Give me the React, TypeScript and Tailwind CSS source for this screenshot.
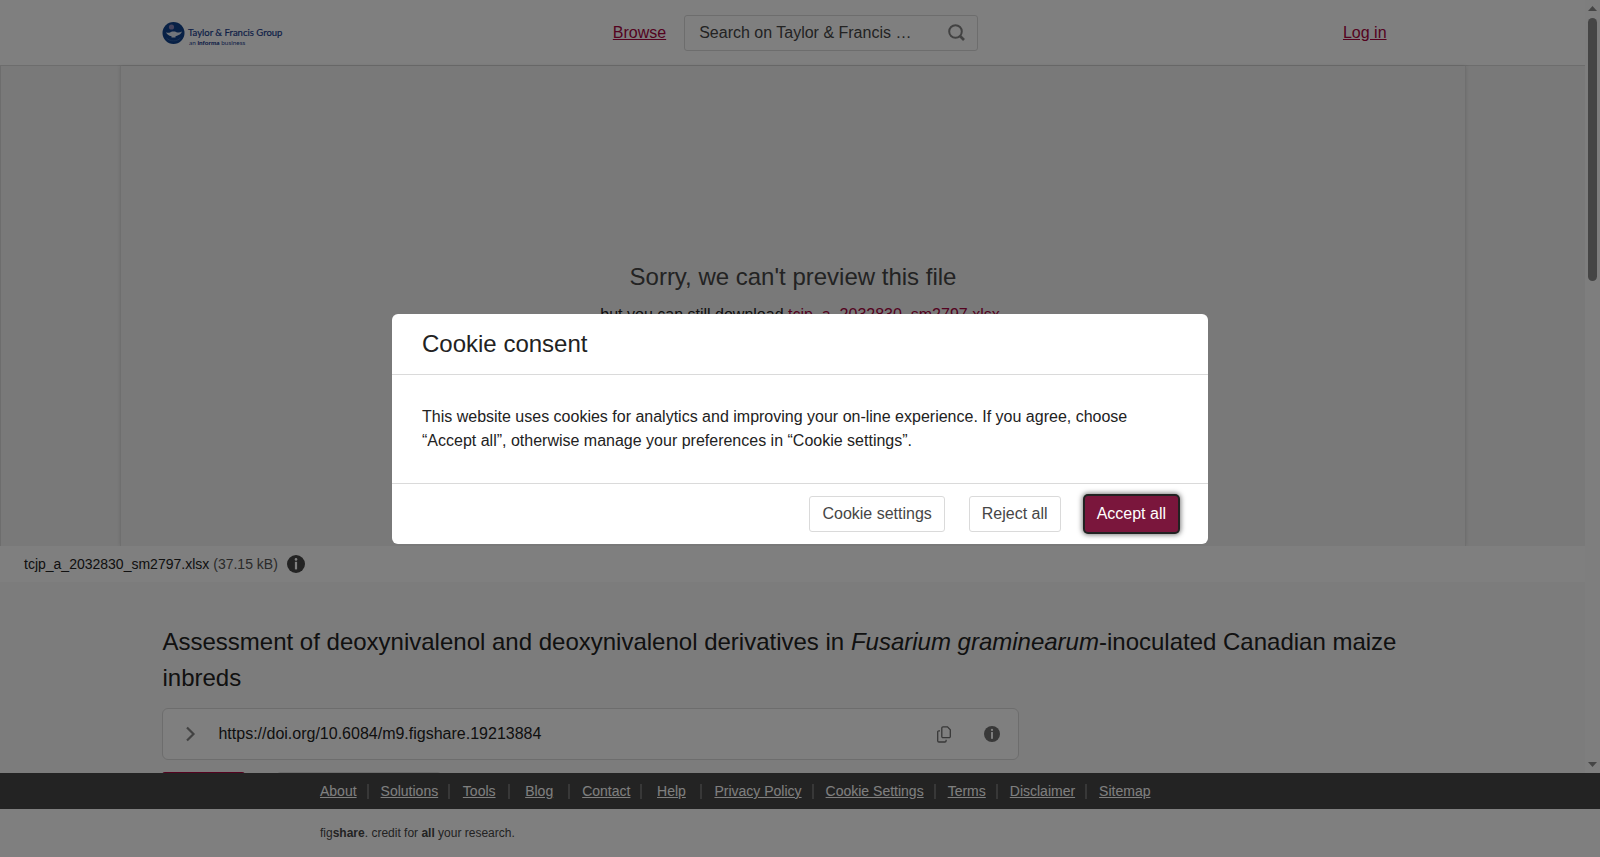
import type { ReactNode } from "react";

const FILE_NAME = "tcjp_a_2032830_sm2797.xlsx";

const FOOTER_LINKS = [
  { label: "About", size: "pr-[10px]" },
  { label: "Solutions", size: "pl-3 pr-[10px]" },
  { label: "Tools", size: "w-[60px]" },
  { label: "Blog", size: "w-[60px]" },
  { label: "Contact", size: "pl-3 pr-[10px]" },
  { label: "Help", size: "w-[60px]" },
  { label: "Privacy Policy", size: "pl-3 pr-[10px]" },
  { label: "Cookie Settings", size: "pl-3 pr-[10px]" },
  { label: "Terms", size: "pl-3 pr-[10px]" },
  { label: "Disclaimer", size: "pl-3 pr-[10px]" },
  { label: "Sitemap", size: "pl-3 pr-[10px]" },
];

function InfoIcon({ className }: { className: string }) {
  return (
    <svg viewBox="0 0 18 18" className={className} aria-hidden="true">
      <circle cx="9" cy="9" r="9" fill="currentColor" />
      <circle cx="9" cy="4.4" r="1.3" fill="#fff" />
      <rect x="7.9" y="6.8" width="2.2" height="7.6" fill="#fff" />
    </svg>
  );
}

function Logo() {
  return (
    <svg width="122" height="28" viewBox="0 -1 122 28" role="img" aria-label="Taylor & Francis Group">
      <circle cx="11.5" cy="13" r="11" fill="#10428c" />
      <circle cx="9.5" cy="7" r="2.6" fill="#8a86b8" />
      <path d="M4 12.2c1.500.7 3 .7 4.500 0l1.500-.6h3l1.500.6c2 .7 4 .3 5.500-.8-.8 2-2.600 3.600-5 4.300l-1.500.5v1.300h-4v-1.300C6.500 15.600 5 14.200 4 12.200z" fill="#e4ecf7" />
      <path d="M4.500 18c3.500 3.800 10.500 3.800 14 0" fill="none" stroke="#3a67a8" strokeWidth="0.8" />
      <text x="26" y="16" fontFamily="Lato, sans-serif" fontSize="9.5" fill="#1d3f8f" stroke="#1d3f8f" strokeWidth="0.2">
        Taylor &amp; Francis Group
      </text>
      <text x="27" y="25" fontFamily="Lato, sans-serif" fontSize="6.4" fill="#1d3f8f">
        an <tspan fontWeight="900">informa</tspan> business
      </text>
    </svg>
  );
}

function Header() {
  return (
    <header className="border-b border-[#dadada] bg-white">
      <div className="mx-auto grid h-[65px] w-[79.5%] grid-cols-[1fr_auto_1fr] items-center">
        <a href="#home" className="justify-self-start">
          <Logo />
        </a>
        <div className="flex items-center gap-[18px] pl-[6px]">
          <a href="#browse" className="text-[#a8043f] underline">Browse</a>
          <label className="flex h-9 w-[294px] items-center rounded-[3px] border border-[#dadada] pr-3 pl-[14px]">
            <input
              type="search"
              aria-label="Search"
              placeholder="Search on Taylor &amp; Francis …"
              className="min-w-0 flex-1 bg-transparent outline-none placeholder:text-[#464646]"
            />
            <svg width="17" height="17" viewBox="0 0 17 17" fill="none" stroke="#848484" strokeWidth="2" aria-hidden="true">
              <circle cx="7.5" cy="7.5" r="6.3" />
              <path d="M12 12l4 4" strokeWidth="2.6" />
            </svg>
          </label>
        </div>
        <a href="#login" className="mr-9 justify-self-end text-[#a8043f] underline">Log in</a>
      </div>
    </header>
  );
}

function FilePreview() {
  return (
    <section>
      <div className="h-[480px] border-l border-[#dadada] bg-[#f3f3f3] px-[119px]">
        <div className="h-full border-x border-[#dfdfdf] pt-[193px] text-center shadow-[0_0_4px_rgba(0,0,0,0.12)]">
          <h2 className="text-2xl leading-9 text-[#464646]">Sorry, we can't preview this file</h2>
          <p className="mt-2 pl-[14px] leading-6">
            but you can still download <a href="#file" className="text-[#a8043f]">{FILE_NAME}</a>
          </p>
        </div>
      </div>
      <div className="flex h-9 items-center bg-white pl-6 text-sm">
        <span>{FILE_NAME}</span>
        <span className="ml-1 text-[#555]">(37.15 kB)</span>
        <button type="button" aria-label="File details" className="ml-[9px] text-[#464646]">
          <InfoIcon className="size-[18px]" />
        </button>
      </div>
    </section>
  );
}

function Article() {
  return (
    <article className="mx-auto w-[79.5%] pt-[42px]">
      <h1 className="text-2xl leading-9">
        Assessment of deoxynivalenol and deoxynivalenol derivatives in <em>Fusarium graminearum</em>-inoculated
        Canadian maize inbreds
      </h1>
      <div className="mt-3 flex h-[52px] w-[68%] items-center rounded-md border border-[#dadada] bg-white pr-[18px] pl-[22px]">
        <button type="button" aria-label="Show citation" className="mr-[22px]">
          <svg width="11" height="16" viewBox="0 0 11 16" fill="none" stroke="#848484" strokeWidth="2.2" aria-hidden="true">
            <path d="M2 1.500l6.500 6.500L2 14.500" />
          </svg>
        </button>
        <span className="flex-1">https://doi.org/10.6084/m9.figshare.19213884</span>
        <button type="button" aria-label="Copy DOI">
          <svg width="14" height="17" viewBox="0 0 14 17" fill="none" stroke="#707070" strokeWidth="1.3" aria-hidden="true">
            <path d="M6 .8h4.500l2.800 3v6.700a1.200 1.200 0 0 1-1.200 1.200H6a1.200 1.200 0 0 1-1.200-1.200V2A1.200 1.200 0 0 1 6 .8z" />
            <path d="M3 4.800H1.900A1.200 1.200 0 0 0 .7 6v8.800A1.200 1.200 0 0 0 1.900 16h6a1.200 1.200 0 0 0 1.200-1.200v-1" />
          </svg>
        </button>
        <button type="button" aria-label="About DOIs" className="ml-[33px] text-[#707070]">
          <InfoIcon className="size-4" />
        </button>
      </div>
      <div className="mt-3 flex gap-8">
        <button type="button" aria-label="Cite" className="h-9 w-[83px] rounded-[3px] bg-[#a8043f]" />
        <button type="button" aria-label="Download" className="h-9 w-[164px] rounded-[3px] border border-[#dadada] bg-white" />
      </div>
    </article>
  );
}

function Scrollbar() {
  return (
    <div className="flex w-[15px] shrink-0 flex-col items-center bg-[#fcfcfc] py-[6px]" aria-hidden="true">
      <svg width="9" height="5" viewBox="0 0 9 5" fill="#8b8b8b">
        <path d="M0 5L4.500 0L9 5z" />
      </svg>
      <div className="mt-[7px] h-[34.5%] w-[9px] rounded-full bg-[#8b8b8b]" />
      <svg width="9" height="5" viewBox="0 0 9 5" fill="#8b8b8b" className="mt-auto">
        <path d="M0 0L4.500 5L9 0z" />
      </svg>
    </div>
  );
}

function Footer() {
  return (
    <footer className="shrink-0">
      <nav className="flex h-9 items-center bg-[#464646] pl-[20%] text-sm text-white">
        {FOOTER_LINKS.map(({ label, size }) => (
          <div
            key={label}
            className={`${size} flex h-[15px] items-center justify-center border-r-2 border-[#707070] last:border-r-0`}
          >
            <a href="#footer" className="whitespace-nowrap underline">{label}</a>
          </div>
        ))}
      </nav>
      <p className="flex h-12 items-center bg-white pl-[20%] text-xs text-[#464646]">
        <span>
          fig<b>share</b>. credit for <b>all</b> your research.
        </span>
      </p>
    </footer>
  );
}

function ModalButton({ children }: { children: ReactNode }) {
  return (
    <button type="button" className="h-9 rounded-[3px] border border-[#dadada] bg-white px-3 text-[#464646]">
      {children}
    </button>
  );
}

function CookieConsent() {
  return (
    <div className="fixed inset-0 flex items-center justify-center bg-black/50">
      <div role="dialog" aria-modal="true" aria-labelledby="consent-title" className="w-[51%] rounded-md bg-white">
        <div className="flex h-[61px] items-center border-b border-[#dadada] px-[30px]">
          <h2 id="consent-title" className="text-2xl">Cookie consent</h2>
        </div>
        <p className="p-[30px] leading-6">
          This website uses cookies for analytics and improving your on-line experience. If you agree, choose
          “Accept all”, otherwise manage your preferences in “Cookie settings”.
        </p>
        <div className="flex h-[61px] items-center justify-end gap-6 border-t border-[#dadada] px-[30px]">
          <ModalButton>Cookie settings</ModalButton>
          <ModalButton>Reject all</ModalButton>
          <button
            type="button"
            className="h-9 rounded-[3px] bg-[#7a163c] px-3 text-white shadow-[0_0_0_2px_#222,0_0_5px_3px_rgba(0,0,0,0.5)]"
          >
            Accept all
          </button>
        </div>
      </div>
    </div>
  );
}

export default function App() {
  return (
    <div className="flex h-screen flex-col bg-[#f9f9f9] font-['Liberation_Sans',Arial,sans-serif] text-base text-[#222]">
      <div className="flex min-h-0 flex-1">
        <main className="min-w-0 flex-1 overflow-hidden">
          <Header />
          <FilePreview />
          <Article />
        </main>
        <Scrollbar />
      </div>
      <Footer />
      <CookieConsent />
    </div>
  );
}
